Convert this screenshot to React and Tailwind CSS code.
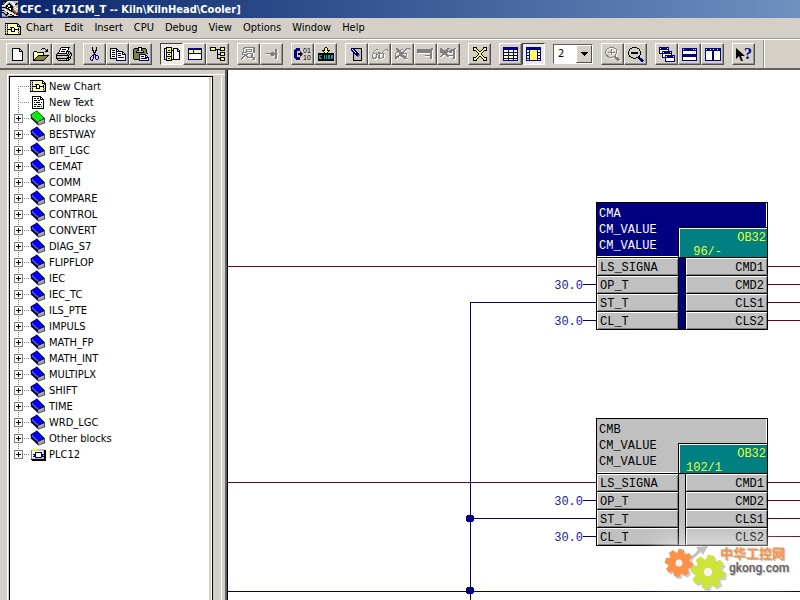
import { useState } from "react";

const COLORS = {
  k: "#000000",
  w: "#ffffff",
  n: "#000080",
  y: "#ffff66",
  p: "#ffffb0",
  o: "#808040",
  g: "#808080",
  l: "#c0c0c0",
  c: "#00a0a0",
  b: "#0000f0",
  G: "#00f000",
  r: "#c04020",
};

// small bitmap icon, one character per pixel
const Bitmap = ({ rows, className = "" }) => {
  const width = Math.max(...rows.map((r) => r.length));
  const paths = {};
  rows.forEach((row, y) => {
    [...row].forEach((ch, x) => {
      if (!COLORS[ch]) return;
      paths[ch] = (paths[ch] || "") + `M${x} ${y}h1v1h-1z`;
    });
  });
  return (
    <svg
      width={width}
      height={rows.length}
      viewBox={`0 0 ${width} ${rows.length}`}
      shapeRendering="crispEdges"
      className={`shrink-0 ${className}`}
      aria-hidden="true"
    >
      {Object.keys(paths).map((ch) => (
        <path key={ch} d={paths[ch]} fill={COLORS[ch]} />
      ))}
    </svg>
  );
};

const ICONS = {
  app: [
    "kkkkklwwwwllllll",
    "kggkwwlllwwlllll",
    "kgkwwlgkllwwllkk",
    "kkwwlgkkkllwwkkl",
    "wwwlkkwwkklwwlll",
    "lllgkkwwkkklllll",
    "kkkkkwkkkkkgwwll",
    "lllgkkkwwkklllww",
    "llwwlgkkwkkrwwll",
    "kkgwwllkkkrrryll",
    "lllgwwwllkkrrryl",
    "kkllgkwwwllkrrrr",
    "lgkllkkwwwwlkrrk",
    "llgkkkllkkwwllkk",
    "lllgklllllkkwwll",
    "ggggggkkkkkkkkkk",
  ],
  chart: [
    "kkkkkkkkkkkkk...",
    "glgpppppppppkk..",
    "kwkpppppppppkwk.",
    "glgpppppppppkkkk",
    "kwkppkkkkpppplgk",
    "glgpppkwwkpppkwk",
    "kwkkkkkwwkkkkklk",
    "glgpppkwwkpppkwk",
    "kwkpppkkkkppplgk",
    "glgppppppppppkwk",
    "kwkpppppppppplgk",
    "kkkkkkkkkkkkkkkk",
  ],
  text: [
    "kkkkkkkkk...",
    "kwwwwwwwkk..",
    "kwkkwkkwkwk.",
    "kwwwwwwwkkkk",
    "kwkkkwkkwwwk",
    "kwwwwwwwwwwk",
    "kwkwkkkkwkwk",
    "kwwwwwwwwwwk",
    "kwkkkwkkkwwk",
    "kwwwwwwwwwwk",
    "kwkkwkkkwkwk",
    "kwwwwwwwwwwk",
    "kkkkkkkkkkkk",
  ],
  newDoc: [
    "kkkkkkkk...",
    "kwwwwwwkk..",
    "kwwwwwwkwk.",
    "kwwwwwwkkkk",
    "kwwwwwwwwwk",
    "kwwwwwwwwwk",
    "kwwwwwwwwwk",
    "kwwwwwwwwwk",
    "kwwwwwwwwwk",
    "kwwwwwwwwwk",
    "kwwwwwwwwwk",
    "kwwwwwwwwwk",
    "kkkkkkkkkkk",
  ],
  open: [
    ".........kkk....",
    "........k...k.k.",
    ".............kk.",
    ".kkk........kkk.",
    "kywykkkkkkk.....",
    "kwywywywywk.....",
    "kywywywywyk.....",
    "kwywykkkkkkkkkkk",
    "kywykoooooooook.",
    "kwykoooooooook..",
    "kykoooooooook...",
    "kkoooooooook....",
    "kkkkkkkkkkk.....",
  ],
  print: [
    ".....kkkkkkkkk..",
    "....kwwwwwwwk...",
    "....kwkkkkwwk...",
    "...kwwwwwwwk....",
    "...kwkkkkwkkkk..",
    "..kwwwwwwwk.klk.",
    ".kkkkkkkkkk.klkk",
    "kllllllllllklklk",
    "kkkkkkkkkkkkkllk",
    "klllllyyylllklk.",
    "kllllllllllkkkk.",
    "kkkkkkkkkkkkklk.",
    ".kllllllllklkk..",
    "..kkkkkkkkkkk...",
  ],
  cut: [
    "..k...k..",
    "..k...k..",
    "..k...k..",
    "..kk.kk..",
    "...k.k...",
    "...kkk...",
    "....k....",
    "...nkn...",
    "..nn.nnn.",
    ".n.n.n..n",
    "n..n.n..n",
    "n..n.n..n",
    "n.n...nn.",
    ".nn......",
  ],
  copy: [
    "kkkkkkk.........",
    "kwwwwwkk........",
    "kwkkkwkwk.......",
    "kwwwwwnnnnnnn...",
    "kwkkkwnwwwwwnn..",
    "kwwwwwnwkkkwnwn.",
    "kwkkkwnwwwwwnnnn",
    "kwwwwwnwkkkwwwwn",
    "kwkkkwnwwwwwwwwn",
    "kwwwwwnwkkkkkkwn",
    "kkkkkknwwwwwwwwn",
    "......nwwwwwwwwn",
    "......nnnnnnnnnn",
  ],
  paste: [
    ".....kkkk.......",
    ".kkkkkyykkkkk...",
    "kooookyykooook..",
    "koookkllkkoook..",
    "kookllllllkook..",
    "kookkkkkkkkook..",
    "koooooooooooook.",
    "kooooonnnnnnn...",
    "kooooonwwwwwnn..",
    "kooooonwkkkwnwn.",
    "kooooonwwwwwnnnn",
    "kooooonwkkkkkkwn",
    ".kkkkknwwwwwwwwn",
    "......nnnnnnnnnn",
  ],
  catalog: [
    "..kkkkkk........",
    "kkkyyyyk.kkkkk..",
    "kwkyyyyk.kwwwkk.",
    "kwkykkykkkwwwkwk",
    "kwkyyyykwkwwwkkk",
    "kwkkkkkkwkwwwwwk",
    "kwkyyyykwkwwwwwk",
    "kwkykkykwkwwwwwk",
    "kwkyyyykwkwwwwwk",
    "kwkkkkkkwkwwwwwk",
    "kwkyyyykwkwwwwwk",
    "kwkykkykwkwwwwwk",
    "kkkyyyykkkkkkkkk",
    "..kkkkkk........",
  ],
  panes: [
    "nnnnnnnnnnnnnn",
    "nnnnnnnnnnnnnn",
    "nyyyynyyyyyyyn",
    "nyyyynyyyyyyyn",
    "nyyyynyyyyyyyn",
    "nnnnnnnnnnnnnn",
    "nwwwwwwwwwwwwn",
    "nwwwwwwwwwwwwn",
    "nwwwwwwwwwwwwn",
    "nwwwwwwwwwwwwn",
    "nwwwwwwwwwwwwn",
    "nnnnnnnnnnnnnn",
  ],
  hierarchy: [
    "kkkkkk....kkkkk",
    "kyyyyk....kyyyk",
    "kyyyykkkkkkyyyk",
    "kkkkkk.k..kkkkk",
    ".......k.......",
    ".......k..kkkkk",
    ".......k..kyyyk",
    ".......kkkkyyyk",
    ".......k..kkkkk",
    ".......k.......",
    ".......k..kkkkk",
    ".......kkkkyyyk",
    "..........kyyyk",
    "..........kkkkk",
  ],
  branch: [
    "...ggggggggggg..",
    "..ggwwwwwwwwgg..",
    "..gw.ggggggwgg..",
    "..gw.gwwwwgwgg..",
    "..gw.ggggggwgg..",
    ".gggggwwwwwwgg..",
    ".gwwwwggggggww..",
    ".ggggggwwwggw...",
    "..wgggww..ggw...",
    "..ggwgg...ggw...",
    ".ggw..gggggggg..",
    "ggww...wwwwwggw.",
    "gww........gggw.",
    "............www.",
  ],
  sink: [
    "..........gg..",
    "..........ggw.",
    "..........ggw.",
    "......ggg.ggw.",
    "gggggggggggg.w",
    "wwwwwggggggg.w",
    "......gggwggw.",
    "........w.ggw.",
    "..........ggw.",
    "..........ggw.",
    "...........ww.",
  ],
  download: [
    ".......kk.......",
    "......kyyk......",
    "......kyyk......",
    "....kkkyykkk....",
    ".....kyyyyk.....",
    "......kyyk......",
    "kkkkkkkkkkkkkkkk",
    "kkkkkkkkkkkkkkkk",
    "kccckkckckcckcck",
    "kckkkkckckcckcck",
    "kcckkkckckcckcck",
    "kccckkckckcckcck",
    "kkkkkkkkkkkkkkkk",
    "kkkkkkkkkkkkkkkk",
  ],
  test: [
    "nnnkkkkkkkk",
    "nwnnllllllk",
    "nnwnnlllllk",
    ".nnwnnllllk",
    "..nnwnnlllk",
    "..knnnnnllk",
    "..klnnnnglk",
    "..kllnngglk",
    "..klllggllk",
    "..klllllllk",
    "..klllllllk",
    "..klllllllk",
    "..kkkkkkkkk",
  ],
  glasses: [
    "....gg.......ggg",
    "...gw.w.....gwwg",
    "..gw.......gw...",
    ".gw...gg..gw....",
    ".gggg.gggggg....",
    "gwwwggwgwwwgw...",
    "gw..gwggw..gw...",
    "gw..gwggw..gw...",
    "ggwggwggw.ggw...",
    ".gggww.gggww....",
    "..www...www.....",
  ],
  glassesOff: [
    ".gg........gggg.",
    ".ggg..gg..ggwwg.",
    "..ggggww.ggw..w.",
    "..gggg..ggww....",
    ".gg.gggggw......",
    "gwwwgggggggg....",
    "gw..ggggwwwgw...",
    "gw.gggggg..gw...",
    "ggggw.ggggggw...",
    "ggggww..gggww...",
    "ggww.....gggg...",
    ".w........www...",
  ],
  watch: [
    "..............ggw",
    "gggggggggggggggg",
    "gggggggggggggggw",
    "gggggggggggggggw",
    "gggggggggggggggw",
    ".wwwwwwwwwwwwggw",
    ".............ggw",
    "........gggggggw",
    "........wwwwwggw",
    ".............ggw",
    ".............ggw",
    "..............ww",
  ],
  watchOff: [
    "gg.....ggg....ggw",
    "ggg...gggw.ggggw",
    "ggggggggwggggggw",
    "ggggggggggggwggw",
    "ggggggggwgggwggw",
    ".wgggggwwwwwwggw",
    "..gggggg.....ggw",
    ".ggww.gggggggggw",
    "ggww...ggwwwwggw",
    ".w......ww...ggw",
    ".............ggw",
    "..............ww",
  ],
  fit: [
    "kkkk......kkkk",
    "kyyk......kyyk",
    "kyyyk....kyyyk",
    "kkkyyk..kyykkk",
    "...kyykkyyk...",
    "....kyyyyk....",
    ".....kyyk.....",
    ".....kyyk.....",
    "....kyyyyk....",
    "...kyykkyyk...",
    "kkkyyk..kyykkk",
    "kyyyk....kyyyk",
    "kyyk......kyyk",
    "kkkk......kkkk",
  ],
  table: [
    "nnnnnnnnnnnnnnn",
    "nnnnnnnnnnnnnnn",
    "nnnnnnnnnnnnnnn",
    "nppppnppppnpppn",
    "nppppnppppnpppn",
    "nnnnnnnnnnnnnnn",
    "nppppnppppnpppn",
    "nppppnppppnpppn",
    "nnnnnnnnnnnnnnn",
    "nppppnppppnpppn",
    "nppppnppppnpppn",
    "nnnnnnnnnnnnnnn",
    "nppppnppppnpppn",
    "nnnnnnnnnnnnnnn",
  ],
  sheet: [
    "nnnnnnnnnnnnnnn",
    "nnnnnnnnnnnnnnn",
    "nnnnnnnnnnnnnnn",
    "nwwnyyyyyyynwwn",
    "nwwnyyyyyyynwwn",
    "nnnnyyyyyyynnnn",
    "nwwnyyyyyyynwwn",
    "nwwnyyyyyyynwwn",
    "nnnnyyyyyyynnnn",
    "nwwnyyyyyyynwwn",
    "nwwnyyyyyyynwwn",
    "nnnnyyyyyyynnnn",
    "nwwnyyyyyyynwwn",
    "nnnnnnnnnnnnnnn",
  ],
  zoomIn: [
    "....ggggg.......",
    "..ggwwwwwgg.....",
    ".gww..g..wwg....",
    ".gw...gw..wgw...",
    "gw....gw...gw...",
    "gw.ggggggg.gw...",
    "gw..wwgwww.gw...",
    ".g....gw..gw....",
    ".gg...w...gw....",
    "..gg....gggw....",
    "....ggggwgggg...",
    ".....wwww.gggg..",
    "...........gggg.",
    "............ggww",
  ],
  zoomOut: [
    "....kkkkk.......",
    "..kk.....kk.....",
    ".k.........k....",
    ".k.........k....",
    "k...........k...",
    "k..kkkkkkk..k...",
    "k..kkkkkkk..k...",
    "k...........k...",
    ".k.........k....",
    ".kk.......kk....",
    "...kk...kknn....",
    ".....kkk..nnnn..",
    "...........nnnn.",
    "............nnnn",
    ".............nn.",
  ],
  cascade: [
    "nnnnnnnnnn......",
    "nwnnnnnnwn......",
    "nnnnnnnnnn......",
    "nwwwwwwwwn......",
    "nwwnnnnnnnnnn...",
    "nwwnwnnnnnnwn...",
    "nnnnnnnnnnnnn...",
    "...nwwwwwwwwn...",
    "...nwwnnnnnnnnnn",
    "...nwwnwnnnnnnwn",
    "...nnnnnnnnnnnnn",
    "......nwwwwwwwwn",
    "......nwwwwwwwwn",
    "......nwwwwwwwwn",
    "......nnnnnnnnnn",
  ],
  tileH: [
    "nnnnnnnnnnnnnnn",
    "nwnnnnnnnnnwnwn",
    "nnnnnnnnnnnnnnn",
    "nwwwwwwwwwwwwwn",
    "nwwwwwwwwwwwwwn",
    "nwwwwwwwwwwwwwn",
    "nnnnnnnnnnnnnnn",
    "nnnnnnnnnnnnnnn",
    "nnnnnnnnnnnnnnn",
    "nwwwwwwwwwwwwwn",
    "nwwwwwwwwwwwwwn",
    "nwwwwwwwwwwwwwn",
    "nnnnnnnnnnnnnnn",
  ],
  tileV: [
    "nnnnnnnnnnnnnnnn",
    "nwnnnwnnwnnnwnnn",
    "nnnnnnnnnnnnnnnn",
    "nwwwwwwnnwwwwwwn",
    "nwwwwwwnnwwwwwwn",
    "nwwwwwwnnwwwwwwn",
    "nwwwwwwnnwwwwwwn",
    "nwwwwwwnnwwwwwwn",
    "nwwwwwwnnwwwwwwn",
    "nwwwwwwnnwwwwwwn",
    "nwwwwwwnnwwwwwwn",
    "nwwwwwwnnwwwwwwn",
    "nnnnnnnnnnnnnnnn",
  ],
  plc: [
    "..yyyyy........",
    ".ypypyplllllll.",
    "gllllllllllllkk",
    "gwwwwwwwwwwwlkk",
    "gwwwnnnnnnnwlkk",
    "gwwwnwwwwwnwlkk",
    "gwnnnwwwwwnnnkk",
    "gwwnnwwwwwnnlkk",
    "gwnnnwwwwwnnnkk",
    "gwwwnnnnnnnwlkk",
    "gllllllllllllkk",
    "kkkkkkkkkkkkkkk",
    ".kkkkkkkkkkkkkk",
  ],
};

const Book = ({ color }) => (
  <svg width="16" height="16" viewBox="0 0 16 16" className="shrink-0" aria-hidden="true">
    <path d="M0.5 4.5L7 0.5L15 8.5V13L8.5 15.5L1 8.5Z" fill="#000" />
    <path d="M1 4.8L7 1L14 8.2L8 11.5Z" fill={color} />
    <path d="M8 12L14.4 9V12.5L8.5 15Z" fill="#c0c0c0" />
    <path d="M8.5 13.6L14.4 10.8" stroke="#808080" strokeWidth="0.9" />
    <path d="M2 5.6L8.2 11.5" stroke="#dfe4ff" strokeWidth="0.8" />
    <path d="M1.4 6.4L7.8 12.6" stroke={color} strokeWidth="0.9" />
  </svg>
);

const CompileIcon = () => (
  <svg width="17" height="16" viewBox="0 0 17 16" aria-hidden="true">
    <path d="M6 2H2L0 4v8l2 2h4v-3H3V5h3z" fill="#000080" shapeRendering="crispEdges" />
    <path d="M4 7h2V5l3 3l-3 3V9H4z" fill="#000" />
    <g fontSize="7" fontFamily="Liberation Sans, sans-serif" fill="#000">
      <text x="9" y="7">01</text>
      <text x="9" y="14">10</text>
    </g>
  </svg>
);

const HelpIcon = () => (
  <svg width="18" height="16" viewBox="0 0 18 16" aria-hidden="true">
    <path d="M1 2v11l3-3l2 5h2l-2-5h4z" fill="#000" />
    <text x="9" y="13" fontSize="16" fontWeight="700" fontFamily="Liberation Serif, serif" fill="#000080">?</text>
  </svg>
);

const TOOLBAR = [
  [["New", "newDoc"], ["Open", "open"], ["Print", "print"]],
  [["Cut", "cut"], ["Copy", "copy"], ["Paste", "paste"]],
  [["Catalog", "catalog", true], ["Overview", "panes"], ["Hierarchy", "hierarchy"]],
  [["Runtime sequence", "branch"], ["Predecessor", "sink"]],
  [["Compile", "compile"], ["Download", "download"]],
  [["Test mode", "test"], ["Watch on", "glasses"], ["Watch off", "glassesOff"], ["Add value", "watch"], ["Remove value", "watchOff"]],
  [["Fit", "fit"]],
  [["Sheet overview", "table"], ["Single sheet", "sheet", true]],
];

const TOOLBAR_RIGHT = [
  [["Zoom in", "zoomIn"], ["Zoom out", "zoomOut"]],
  [["Cascade", "cascade"], ["Tile horizontally", "tileH"], ["Tile vertically", "tileV"]],
  [["Context help", "help"]],
];

const MENU = ["Chart", "Edit", "Insert", "CPU", "Debug", "View", "Options", "Window", "Help"];

const TREE = [
  ["New Chart", "chart"], ["New Text", "text"], ["All blocks", "green"],
  ["BESTWAY"], ["BIT_LGC"], ["CEMAT"], ["COMM"], ["COMPARE"], ["CONTROL"],
  ["CONVERT"], ["DIAG_S7"], ["FLIPFLOP"], ["IEC"], ["IEC_TC"], ["ILS_PTE"],
  ["IMPULS"], ["MATH_FP"], ["MATH_INT"], ["MULTIPLX"], ["SHIFT"], ["TIME"],
  ["WRD_LGC"], ["Other blocks"], ["PLC12", "plc"],
];

const ToolButton = ({ label, icon, pressed }) => (
  <button
    type="button"
    aria-label={label}
    aria-pressed={pressed ? true : undefined}
    className={`flex h-[22px] w-[23px] items-center justify-center border ${
      pressed
        ? "border-t-[#404040] border-l-[#404040] border-r-white border-b-white bg-[#ecebe6]"
        : "border-t-white border-l-white border-r-[#505050] border-b-[#505050] shadow-[inset_-1px_-1px_0_#9a968e]"
    }`}
  >
    {icon === "compile" ? <CompileIcon /> : icon === "help" ? <HelpIcon /> : <Bitmap rows={ICONS[icon]} />}
  </button>
);

const ToolGroup = ({ items }) => (
  <div className="flex">
    {items.map(([label, icon, pressed]) => (
      <ToolButton key={label} label={label} icon={icon} pressed={pressed} />
    ))}
  </div>
);

const Toolbar = () => {
  const [sheet, setSheet] = useState("2");
  return (
    <div className="flex h-[29px] shrink-0 items-center gap-2 border-t border-white pl-1.5 shadow-[0_-1px_0_#a09c94]">
      {TOOLBAR.map((items) => <ToolGroup key={items[0][0]} items={items} />)}
      <div className="relative h-5 w-10 border border-t-[#606060] border-l-[#606060] border-r-white border-b-white bg-white">
        <select
          aria-label="Sheet"
          value={sheet}
          onChange={(e) => setSheet(e.target.value)}
          className="block h-full w-full appearance-none bg-white pl-1 text-[11px] leading-4 outline-none"
        >
          {["1", "2", "3", "4", "5", "6"].map((n) => <option key={n}>{n}</option>)}
        </select>
        <span className="pointer-events-none absolute inset-y-0 right-0 flex w-4 items-center justify-center border border-t-white border-l-white border-r-[#505050] border-b-[#505050] bg-[#d4d0c8]">
          <Bitmap rows={["kkkkkkk", ".kkkkk.", "..kkk..", "...k..."]} />
        </span>
      </div>
      {TOOLBAR_RIGHT.map((items) => <ToolGroup key={items[0][0]} items={items} />)}
      <div className="h-full w-0.5 border-l border-[#909090] bg-white" />
    </div>
  );
};

const Branch = ({ leaf, first, last }) => (
  <svg width="16" height="16" viewBox="0 0 16 16" shapeRendering="crispEdges" className="shrink-0" aria-hidden="true">
    <g stroke="#808080" strokeDasharray="1 1">
      {!first && <path d="M4.5 0V8" />}
      {!last && <path d="M4.5 8V16" />}
      <path d="M4 8.5H15" />
    </g>
    {!leaf && (
      <>
        <rect x="0.5" y="4.5" width="8" height="8" fill="#fff" stroke="#808080" />
        <path d="M2 8.5H7M4.5 6V11" stroke="#000" />
      </>
    )}
  </svg>
);

const TreeIcon = ({ kind }) => {
  if (kind === "green") return <Book color={COLORS.G} />;
  if (!kind) return <Book color={COLORS.b} />;
  return <Bitmap rows={ICONS[kind]} />;
};

const Catalog = () => (
  <aside className="flex w-[227px] shrink-0 border-r-2 border-[#606060] pt-1 pl-[7px]">
    <div className="flex flex-1 border-t border-l border-white pt-px pl-px">
      <div className="w-[204px] border-t border-l border-r border-black bg-white pt-px pl-1 shadow-[inset_-1px_0_0_#fff,inset_-3px_0_0_#d4d0c8]">
        <ul>
          {TREE.map(([name, kind], i) => (
            <li key={name}>
              <button type="button" className="flex h-4 items-center text-[11px] leading-4 whitespace-nowrap">
                <Branch leaf={i < 2} first={i === 0} last={i === TREE.length - 1} />
                <span className="mr-[3px] flex w-4 justify-center"><TreeIcon kind={kind} /></span>
                <span className="pt-0.5">{name}</span>
              </button>
            </li>
          ))}
        </ul>
      </div>
      <div className="flex-1" />
      <div className="mr-[3px] w-px bg-white" />
    </div>
  </aside>
);

const PINS = [["LS_SIGNA", "CMD1"], ["OP_T", "CMD2"], ["ST_T", "CLS1"], ["CL_T", "CLS2"]];

const Pin = ({ children, right }) => (
  <div
    className={`h-[18px] border-b border-black bg-[#c0c0c0] px-[3px] leading-[20px] shadow-[inset_1px_1px_0_#fff,inset_-1px_-1px_0_#808080] ${
      right ? "text-right" : ""
    }`}
  >
    {children}
  </div>
);

const Block = ({ name, order, selected, className }) => (
  <section
    className={`absolute w-[172px] border border-b-0 border-black font-['Liberation_Mono',monospace] text-[12px] text-black ${className}`}
  >
    <header
      className={`flex h-[55px] justify-between border-b border-black shadow-[inset_-1px_-1px_0_#fff] ${
        selected ? "bg-[#000080] text-white" : "bg-[#c0c0c0]"
      }`}
    >
      <div className="pt-[3px] pl-0.5 leading-4">
        <p>{name}</p>
        <p>CM_VALUE</p>
        <p>CM_VALUE</p>
      </div>
      <div className="mt-6 w-[89px] self-stretch border-t border-l border-black bg-[#008080] pt-[3px] leading-[14px] text-[#e8ff30] shadow-[inset_1px_1px_0_#fff]">
        <p className="pr-px text-right">OB32</p>
        <p className="pr-[45px] text-right">{order}</p>
      </div>
    </header>
    <div className="flex">
      <div className="flex-1">
        {PINS.map(([pin]) => <Pin key={pin}>{pin}</Pin>)}
      </div>
      <div className={`w-2 border-x border-b border-black ${selected ? "bg-[#000080]" : "bg-[#c0c0c0]"}`} />
      <div className="w-[81px]">
        {PINS.map(([, pin]) => <Pin key={pin} right>{pin}</Pin>)}
      </div>
    </div>
  </section>
);

const RED_OUT = [196, 214, 232, 250, 412, 430, 448, 466];
const CONSTANTS = [214, 250, 430, 466];

const Wires = () => (
  <svg className="absolute inset-0 h-full w-full" shapeRendering="crispEdges" aria-hidden="true">
    <g stroke="#780018">
      <line x1="0" y1="196.5" x2="368" y2="196.5" />
      <line x1="0" y1="412.5" x2="368" y2="412.5" />
      {RED_OUT.map((y) => <line key={y} x1="540" y1={y + 0.5} x2="100%" y2={y + 0.5} />)}
    </g>
    <g stroke="#000070">
      <line x1="242.5" y1="232" x2="242.5" y2="100%" />
      <line x1="242" y1="232.5" x2="368" y2="232.5" />
      <line x1="242" y1="448.5" x2="368" y2="448.5" />
      <line x1="0" y1="521.5" x2="100%" y2="521.5" />
      {CONSTANTS.map((y) => <line key={y} x1="355" y1={y + 0.5} x2="368" y2={y + 0.5} />)}
    </g>
    <g fill="#000080">
      <circle cx="242" cy="448.5" r="4" />
      <circle cx="242" cy="520.5" r="4" />
    </g>
    <g fill="#1818a0" fontSize="12" fontFamily="Liberation Mono, monospace">
      {CONSTANTS.map((y) => <text key={y} x="355" y={y + 5} textAnchor="end">30.0</text>)}
    </g>
  </svg>
);

const TEETH = [0, 45, 90, 135, 180, 225, 270, 315];

const Gear = ({ x, y, size, color }) => (
  <g transform={`translate(${x} ${y}) scale(${size})`}>
    {TEETH.map((a) => (
      <path key={a} d="M-0.28 -0.6L-0.18 -1H0.18L0.28 -0.6Z" fill={color} transform={`rotate(${a + 10})`} />
    ))}
    <circle r="0.5" fill="none" stroke={color} strokeWidth="0.5" />
  </g>
);

const Watermark = () => (
  <div className="absolute top-[470px] left-[422px] h-[56px] w-[150px]">
    <div className="absolute inset-x-1 top-1 h-9 rounded-full bg-white/70 blur-md" />
    <svg width="80" height="56" viewBox="0 0 80 56" className="absolute inset-0" aria-hidden="true">
      <g opacity="0.3" transform="translate(2 2)">
        <Gear x={29} y={23} size={14} color="#606060" />
        <Gear x={58} y={32} size={17} color="#606060" />
      </g>
      <path d="M40 17q5-3 8-7l-2-3l12-1l-5 9l-2-3q-4 4-9 7z" fill="#c0c0c0" />
      <circle cx="29" cy="23" r="5" fill="#f4f4f4" />
      <circle cx="58" cy="32" r="6" fill="#f4f4f4" />
      <Gear x={29} y={23} size={14} color="#fb9248" />
      <Gear x={58} y={32} size={17} color="#cde43a" />
    </svg>
    <div className="relative pt-[7px] pl-[70px] leading-[14px] whitespace-nowrap">
      <p className="font-['Liberation_Sans','Noto_Sans_CJK_SC',sans-serif] text-[13px] font-bold text-[#fb9248] text-shadow-[1px_1px_1px_#b0b0b0]">中华工控网</p>
      <p className="pl-[9px] font-[Roboto,sans-serif] text-[12px] font-medium text-[#606060] text-shadow-[1px_1px_1px_#c0c0c0]">gkong.com</p>
    </div>
  </div>
);

const App = () => (
  <div className="flex h-screen flex-col overflow-hidden bg-[#d4d0c8] font-['DejaVu_Sans_Condensed','DejaVu_Sans',sans-serif] text-black">
    <header className="flex h-[18px] shrink-0 items-center gap-0.5 bg-linear-to-r from-[#0a246a] to-[#7090c0] pl-0.5 text-white">
      <Bitmap rows={ICONS.app} />
      <h1 className="pt-0.5 text-[11px] leading-4 font-bold">CFC - [471CM_T -- Kiln\KilnHead\Cooler]</h1>
    </header>
    <nav className="flex h-[21px] shrink-0 items-center gap-[11px] pl-[5px] text-[11px]">
      <div className="flex items-center gap-[5px]">
        <Bitmap rows={ICONS.chart} />
        <button type="button">{MENU[0]}</button>
      </div>
      {MENU.slice(1).map((item) => <button key={item} type="button">{item}</button>)}
    </nav>
    <Toolbar />
    <div className="flex min-h-0 flex-1 border-t-2 border-[#606060]">
      <Catalog />
      <main className="relative flex-1 overflow-hidden border-l border-black bg-white">
        <Wires />
        <Block name="CMA" order="96/-" selected className="top-[132px] left-[368px]" />
        <Block name="CMB" order="102/1" className="top-[348px] left-[368px]" />
        <Watermark />
      </main>
    </div>
  </div>
);

export default App;
